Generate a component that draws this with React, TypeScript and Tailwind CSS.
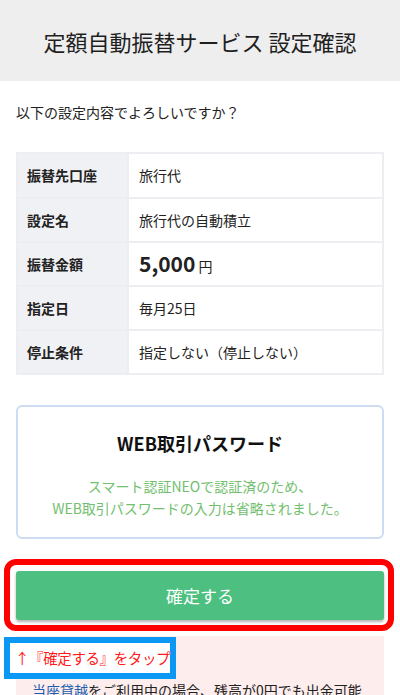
import React from 'react';

const rows: { label: string; value: React.ReactNode }[] = [
  { label: '振替先口座', value: '旅行代' },
  { label: '設定名', value: '旅行代の自動積立' },
  {
    label: '振替金額',
    value: (
      <span className="flex items-baseline gap-[3px]">
        <span className="text-[21px] font-bold">5,000</span>
        <span className="text-[14px]">円</span>
      </span>
    ),
  },
  { label: '指定日', value: '毎月25日' },
  { label: '停止条件', value: '指定しない（停止しない）' },
];

export default function App() {
  return (
    <div className="min-h-screen bg-white text-[#222] font-['Noto_Sans_CJK_JP','Noto_Sans',sans-serif] overflow-hidden">
      {/* header */}
      <div className="h-[81px] bg-[#eeeeee] flex items-center justify-center">
        <h1 className="text-[22px] leading-none text-[#1f1f1f]">定額自動振替サービス 設定確認</h1>
      </div>

      <p className="mt-[21px] px-4 text-[14px] leading-[20px]">以下の設定内容でよろしいですか？</p>

      {/* settings table */}
      <div className="mx-4 mt-[30px] border-2 border-[#eceef1]">
        {rows.map((row, i) => (
          <div
            key={row.label}
            className={`grid grid-cols-[109px_1fr] ${i > 0 ? 'h-[44px] border-t-2 border-[#eceef1]' : 'h-[43px]'}`}
          >
            <div className="bg-[#f0f1f4] flex items-center pl-[9px] text-[14px] font-bold">{row.label}</div>
            <div className="flex items-center pl-[10px] text-[14px] border-l-2 border-[#eceef1]">{row.value}</div>
          </div>
        ))}
      </div>

      {/* password note */}
      <div className="mx-4 mt-[30px] h-[134px] border-2 border-[#cbdcf3] rounded-[6px] pt-[24px] text-center">
        <div className="text-[18px] leading-[24px] font-bold text-[#111]">WEB取引パスワード</div>
        <div className="mt-[20px] text-[14px] leading-[22px] text-[#72c06e]">
          スマート認証NEOで認証済のため、
          <br />
          WEB取引パスワードの入力は省略されました。
        </div>
      </div>

      {/* confirm button */}
      <div className="relative mx-4 mt-[32px]">
        <button className="w-full h-[49px] rounded-[3px] bg-[#4dbf80] text-white text-[17px] shadow-[0_2px_3px_rgba(0,0,0,0.3)]">
          確定する
        </button>
        <div className="absolute -left-[12px] -top-[12px] -right-[10px] -bottom-[11px] border-[6px] border-[#ff0000] rounded-[12px] pointer-events-none" />
      </div>

      {/* notice */}
      <div className="relative mx-4 mt-[16px] bg-[#fdeded] pt-[44px] pl-4 pr-1 pb-6">
        <div className="absolute -left-[12px] top-[1px] w-[172px] h-[42px] border-[6px] border-[#0a98f4] bg-white flex items-center pl-[5px]">
          <span className="text-[14.5px] text-[#ff1a1a] whitespace-nowrap tracking-[-0.4px]">↑『確定する』をタップ</span>
        </div>
        <p className="text-[14px] leading-[20px] whitespace-nowrap">
          <span className="text-[#1d5fb0] underline">当座貸越</span>をご利用中の場合、残高が0円でも出金可能
          <br />
          となります。
        </p>
      </div>
    </div>
  );
}
